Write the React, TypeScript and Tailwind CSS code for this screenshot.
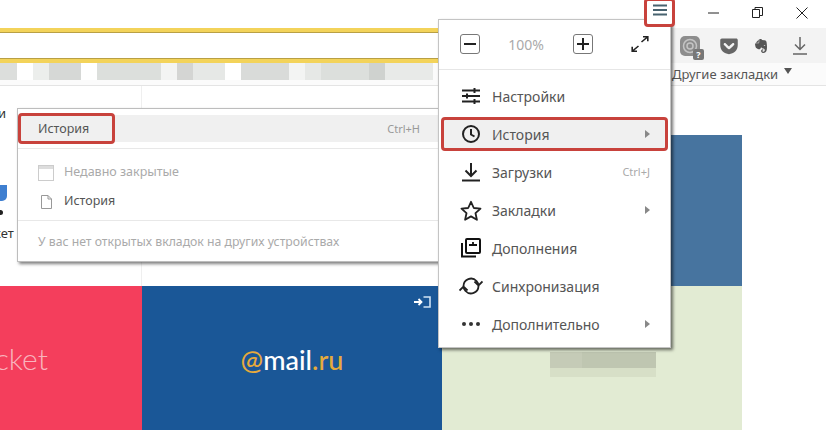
import { FaGetPocket, FaEvernote } from 'react-icons/fa';

const fontUi = { fontFamily: '"Noto Sans", "Open Sans", sans-serif' };

const pills = [
  { w: 17, c: '#dcdedc' }, { w: 16, c: '#ffffff' }, { w: 16, c: '#eceeec' }, { w: 32, c: '#d6d8d6' },
  { w: 16, c: '#ffffff' }, { w: 64, c: '#dcdfdc' }, { w: 16, c: '#f3f4f3' },
  { w: 16, c: '#d4d5d3' }, { w: 32, c: '#e6e8e6' }, { w: 16, c: '#ffffff' }, { w: 48, c: '#d9dbd9' },
  { w: 16, c: '#f3f4f3' }, { w: 16, c: '#e6e8e6' }, { w: 48, c: '#dcdfdc' }, { w: 16, c: '#cfd2cf' }, { w: 48, c: '#e8eae8' },
];

function Hamburger() {
  return (
    <svg width="14" height="12" viewBox="0 0 14 12">
      <path d="M0 1.500h14M0 6h14M0 10.500h14" stroke="#47626f" strokeWidth="2" />
    </svg>
  );
}

function WindowControls() {
  return (
    <div className="absolute right-0 top-0 flex h-[25px] items-center">
      <svg width="11" height="2" viewBox="0 0 11 2" className="mr-[33px]"><path d="M0 1h11" stroke="#222" /></svg>
      <svg width="11" height="11" viewBox="0 0 11 11" className="mr-[33px]">
        <path d="M.5 2.500h7v8h-7zM3 2.500V.5h7.500v8H7.500" fill="none" stroke="#222" />
      </svg>
      <svg width="12" height="12" viewBox="0 0 12 12" className="mr-[18px]"><path d="M.5.5l11 11M11.500.5l-11 11" stroke="#222" /></svg>
    </div>
  );
}

function ToolbarIcons() {
  return (
    <div className="ml-auto flex h-full w-[155px] items-center bg-[#f3f3f3] pl-[9px]">
      <div className="relative h-[20px] w-[20px] rounded-[5px] bg-[#8d8d8d]">
        <svg width="20" height="20" viewBox="0 0 20 20">
          <circle cx="10" cy="10" r="6.500" fill="none" stroke="#c4c4c4" strokeWidth="1.500" />
          <circle cx="10" cy="10" r="3" fill="none" stroke="#c4c4c4" strokeWidth="1.500" />
        </svg>
        <span className="absolute -bottom-[4px] -right-[4px] flex h-[11px] w-[11px] items-center justify-center rounded-[2px] bg-[#777] text-[9px] font-bold leading-none text-white">?</span>
      </div>
      <FaGetPocket className="ml-[19px] text-[#666]" size={20} />
      <FaEvernote className="ml-[14px] text-[#555]" size={16} />
      <svg width="14" height="18" viewBox="0 0 14 18" className="ml-[24px]">
        <path d="M7 0v12M2 7.500l5 5 5-5M0 17h14" fill="none" stroke="#666" strokeWidth="1.500" />
      </svg>
    </div>
  );
}

function MenuArrow() {
  return <span className="h-0 w-0 border-y-[4px] border-l-[5px] border-y-transparent border-l-[#888]" />;
}

const iconSettings = (
  <svg width="20" height="18" viewBox="0 0 20 18">
    <path d="M1 3.500h18M1 9h18M1 14.500h18M13.500 1v5M6 6.500v5M13.500 12v5" fill="none" stroke="#222" strokeWidth="2" />
  </svg>
);
const iconClock = (
  <svg width="20" height="20" viewBox="0 0 20 20">
    <circle cx="10" cy="10" r="8" fill="none" stroke="#222" strokeWidth="2" />
    <path d="M10 5v5.500l3.500 2" fill="none" stroke="#222" strokeWidth="2" />
  </svg>
);
const iconDownload = (
  <svg width="20" height="20" viewBox="0 0 20 20">
    <path d="M10 1v13M4.500 8.500L10 14l5.500-5.500" fill="none" stroke="#222" strokeWidth="2" />
    <path d="M1 18.500h18" stroke="#222" strokeWidth="2" />
  </svg>
);
const iconStar = (
  <svg width="22" height="21" viewBox="0 0 22 21">
    <path d="M11 1.800l2.800 6.200 6.700.7-5 4.500 1.400 6.600L11 16.400l-5.900 3.400 1.400-6.600-5-4.500 6.700-.7z" fill="none" stroke="#222" strokeWidth="1.800" strokeLinejoin="round" />
  </svg>
);
const iconAddons = (
  <svg width="20" height="20" viewBox="0 0 20 20">
    <path d="M1 5v13.500h14" fill="none" stroke="#111" strokeWidth="2" />
    <rect x="5" y="1" width="14" height="14" rx="1" fill="none" stroke="#111" strokeWidth="2" />
    <path d="M8 7h8M12 4v3" fill="none" stroke="#111" strokeWidth="1.800" />
  </svg>
);
const iconSync = (
  <svg width="24" height="20" viewBox="0 0 24 20">
    <path d="M4.500 10a7.500 7.500 0 0 1 13-5l2 3M19.500 10a7.500 7.500 0 0 1-13 5l-2-3" fill="none" stroke="#222" strokeWidth="1.800" />
    <path d="M23.500 5.500l-4 4-4-4M.5 14.500l4-4 4 4" fill="none" stroke="#222" strokeWidth="1.800" />
  </svg>
);
const iconDots = (
  <svg width="20" height="6" viewBox="0 0 20 6">
    <circle cx="3" cy="3" r="2" fill="#333" /><circle cx="10" cy="3" r="2" fill="#333" /><circle cx="17" cy="3" r="2" fill="#333" />
  </svg>
);

const menuItems = [
  { label: 'Настройки', icon: iconSettings },
  { label: 'История', icon: iconClock, arrow: true, active: true },
  { label: 'Загрузки', icon: iconDownload, hint: 'Ctrl+J' },
  { label: 'Закладки', icon: iconStar, arrow: true },
  { label: 'Дополнения', icon: iconAddons },
  { label: 'Синхронизация', icon: iconSync },
  { label: 'Дополнительно', icon: iconDots, arrow: true },
];

function MainMenu() {
  return (
    <div className="absolute left-[438px] top-[19px] z-10 h-[329px] w-[233px] border border-[#c4c4c4] bg-white shadow-[2px_2px_3px_rgba(0,0,0,0.55)]" style={fontUi}>
      <div className="flex h-[50px] items-center border-b border-[#e6e6e6] pl-[21px]">
        <span className="-mt-[2px] flex h-[20px] w-[20px] items-center justify-center rounded-[3px] border border-[#777]">
          <span className="h-[2px] w-[12px] bg-[#222]" />
        </span>
        <span className="ml-[28px] w-[36px] text-center text-[14px] text-[#aaa]">100%</span>
        <span className="-mt-[2px] ml-[29px] flex h-[20px] w-[20px] items-center justify-center rounded-[3px] border border-[#777]">
          <svg width="12" height="12" viewBox="0 0 12 12"><path d="M0 6h12M6 0v12" stroke="#222" strokeWidth="2" /></svg>
        </span>
        <svg width="18" height="16" viewBox="0 0 18 16" className="-mt-[2px] ml-[38px]">
          <path d="M10.500 6l6-5M12 .8h4.800v4.500M7.500 10l-6 5M6 15.200H1.200v-4.500" fill="none" stroke="#222" strokeWidth="1.600" />
        </svg>
      </div>
      <div className="pt-[7px]">
        {menuItems.map((item) => (
          <div
            key={item.label}
            className={`mx-[2px] flex items-center text-[14px] text-[#555] ${
              item.active
                ? 'my-[2px] h-[34px] rounded-[4px] border-[3px] border-[#c8423c] bg-[#f0f0f0] pr-[15px]'
                : 'h-[38px] pr-[18px]'
            }`}
          >
            <span className={`flex w-[24px] justify-center ${item.active ? 'ml-[15px]' : 'ml-[18px]'}`}>{item.icon}</span>
            <span className="ml-[9px]">{item.label}</span>
            <span className="ml-auto flex items-center text-[11px] text-[#aaa]">
              {item.hint}
              {item.arrow && <MenuArrow />}
            </span>
          </div>
        ))}
      </div>
    </div>
  );
}

function HistorySubmenu() {
  return (
    <div className="absolute left-[17px] top-[108px] z-10 h-[154px] w-[424px] border border-[#bdbdbd] bg-white shadow-[2px_2px_3px_rgba(0,0,0,0.5)]" style={fontUi}>
      <div className="mt-[6px] flex h-[27px] items-center justify-between bg-[#f0f0f0] px-[20px] pt-[2px]">
        <span className="text-[12.500px] text-[#555]">История</span>
        <span className="text-[11px] text-[#999]">Ctrl+H</span>
      </div>
      <div className="absolute left-0 top-[4px] h-[31px] w-[97px] rounded-[4px] border-[3px] border-[#c8423c]" />
      <div className="mt-[6px] border-t border-[#e8e8e8] pt-[9px]">
        <div className="flex h-[29px] items-center pl-[20px] text-[12.500px] text-[#aaa]">
          <span className="relative h-[16px] w-[16px] border border-[#ccc] bg-white">
            <span className="absolute inset-x-0 top-0 h-[3px] bg-[#ddd]" />
          </span>
          <span className="ml-[10px]">Недавно закрытые</span>
        </div>
        <div className="flex h-[29px] items-center pl-[23px] text-[12.500px] text-[#555]">
          <svg width="11" height="14" viewBox="0 0 11 14">
            <path d="M.5.500h6.500l3.500 3.500v9.500h-10zM7 .5v3.500h3.500" fill="none" stroke="#999" />
          </svg>
          <span className="ml-[12px]">История</span>
        </div>
      </div>
      <div className="mt-[4px] flex h-[42px] items-center border-t border-[#e8e8e8] pl-[20px] pt-[2px] text-[12.250px] text-[#aaa]">
        У вас нет открытых вкладок на других устройствах
      </div>
    </div>
  );
}

export default function App() {
  return (
    <div className="relative h-[430px] w-[826px] overflow-hidden bg-white" style={fontUi}>
      {/* title bar */}
      <div className="relative h-[28px] bg-white">
        <div className="absolute left-[644px] top-[-2px] z-20 flex h-[29px] w-[31px] justify-center rounded-[4px] border-[3px] border-[#c8423c] bg-white pt-[3px]">
          <Hamburger />
        </div>
        <WindowControls />
      </div>

      {/* address bar */}
      <div className="flex h-[35px] items-center">
        <div className="h-full w-[440px] border-y-[4px] border-[#f3d35a]">
          <div className="h-full border-y border-[#b9a044] bg-white" />
        </div>
        <ToolbarIcons />
      </div>

      {/* bookmarks bar */}
      <div className="relative h-[23px] border-b border-[#e4e4e4] bg-[#fbfbfb]">
        <div className="flex h-[17px]">
          {pills.map((p, i) => (
            <span key={i} className="h-full" style={{ width: p.w, backgroundColor: p.c }} />
          ))}
        </div>
        <div className="absolute left-[672px] top-0 flex items-start text-[13px] leading-[22px] text-[#555]">
          Другие закладки
          <span className="ml-[6px] mt-[5px] h-0 w-0 border-x-[4px] border-t-[6px] border-x-transparent border-t-[#555]" />
        </div>
      </div>

      {/* tiles */}
      <div className="grid h-[344px] grid-cols-[142px_300px_300px] grid-rows-[200px_144px]">
        <div className="overflow-hidden border-r border-[#efefef] bg-white text-[13px] text-[#333]">
          <div className="-ml-[2px] mt-[18px]">и</div>
          <div className="-ml-[8px] mt-[61px] h-[16px] w-[15px] rounded-b-[5px] bg-[#3f7fd0]" />
          <div className="mt-[9px] h-[5px] w-[3px] rounded-r-full bg-[#222]" />
          <div className="-ml-[6px] mt-[9px]">кет</div>
        </div>
        <div className="bg-white" />
        <div className="bg-white pt-[49px]">
          <div className="h-full bg-[#47749f]" />
        </div>
        <div className="flex items-center justify-end overflow-hidden bg-[#f43e5c]">
          <span className="mr-[94px] whitespace-nowrap text-[30px] font-light leading-none text-[#f9b3bd]" style={{ fontFamily: 'Lato, sans-serif' }}>
            Pocket
          </span>
        </div>
        <div className="relative flex items-center justify-center bg-[#1a5797]">
          <span className="mt-[3px] flex items-baseline text-[27px] font-medium leading-none text-white" style={{ fontFamily: 'Lato, sans-serif' }}>
            <span className="text-[#e6aa3c]">@</span>mail<span className="text-[#e6aa3c]">.ru</span>
          </span>
          <svg width="17" height="12" viewBox="0 0 17 12" className="absolute right-[11px] top-[10px]">
            <path d="M0 6h7M4.500 3l3 3-3 3" fill="none" stroke="#fff" strokeWidth="1.800" />
            <path d="M9.500 1H16v10H9.500" fill="none" stroke="#cfe3f5" strokeWidth="1.600" />
          </svg>
        </div>
        <div className="bg-[#e2ebd3]">
          <div className="ml-[108px] mt-[66px] flex h-[16px] w-[106px]">
            <span className="w-[32px] bg-[#c5cbb7]" />
            <span className="w-[74px] bg-[#bfc6b1]" />
          </div>
          <div className="ml-[108px] h-[9px] w-[106px] bg-[#d7dfc7]" />
        </div>
      </div>

      <HistorySubmenu />
      <MainMenu />
    </div>
  );
}
